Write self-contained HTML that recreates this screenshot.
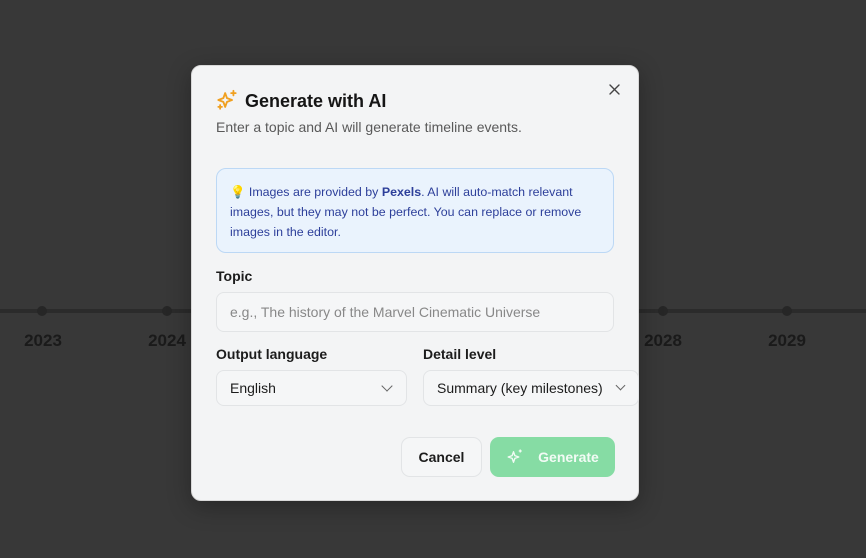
<!DOCTYPE html>
<html><head><style>
*{box-sizing:border-box;margin:0;padding:0}
body{width:866px;height:558px;background:#383838;font-family:"Liberation Sans",sans-serif;position:relative;overflow:hidden}
.line{position:absolute;left:0;top:309px;width:866px;height:4px;background:#2b2b2b}
.dot{position:absolute;top:306px;width:10px;height:10px;border-radius:50%;background:#262626}
.yr{position:absolute;top:331px;font-weight:bold;font-size:17px;color:#1a1a1a;width:60px;text-align:center}
.dlg{position:absolute;left:191px;top:65px;width:448px;height:436px;background:#f3f4f5;border-radius:10px;border:1px solid #d8d8d8;box-shadow:0 6px 24px rgba(0,0,0,.3)}
.title{position:absolute;left:53px;top:25px;font-size:18px;font-weight:bold;color:#151515}
.sub{position:absolute;left:24px;top:53px;font-size:14px;color:#595959}
.info{position:absolute;left:24px;top:102px;width:398px;height:85px;border:1px solid #bcd8f5;background:#eaf3fd;border-radius:10px;padding:13px 12px 0 13px;font-size:12.4px;line-height:20px;color:#2d3f9a}
.lbl{position:absolute;font-size:14px;font-weight:bold;color:#1c1c1c}
.inp{position:absolute;border:1px solid #e2e4e6;border-radius:8px;background:#f5f6f7;font-size:14px;padding-left:13px;display:flex;align-items:center;color:#1c1c1c}
.chev{position:absolute;top:13px;width:8px;height:8px;border-right:1.3px solid #666;border-bottom:1.3px solid #666;transform:rotate(45deg)}
.btn{position:absolute;top:371px;height:40px;border-radius:9px;font-size:14px;font-weight:bold;display:flex;align-items:center;justify-content:center}
</style></head><body>
<div class="line"></div>
<div class="dot" style="left:37px"></div><div class="dot" style="left:162px"></div><div class="dot" style="left:658px"></div><div class="dot" style="left:782px"></div>
<div class="yr" style="left:13px">2023</div><div class="yr" style="left:137px">2024</div><div class="yr" style="left:633px">2028</div><div class="yr" style="left:757px">2029</div>
<div class="dlg">
<svg style="position:absolute;left:24px;top:23px" width="22" height="22" viewBox="0 0 24 24" fill="none" stroke="#f0a020" stroke-width="2" stroke-linejoin="round" stroke-linecap="round"><path d="M10 4.5 L12 10 L17.5 12 L12 14 L10 19.5 L8 14 L2.5 12 L8 10Z"/><path d="M19 2v5M16.5 4.5h5M4.5 17.5v4M2.5 19.5h4"/></svg>
<div class="title">Generate with AI</div>
<svg style="position:absolute;left:417px;top:18px" width="11" height="11" viewBox="0 0 11 11" stroke="#444" stroke-width="1.4" stroke-linecap="round"><path d="M1 1L10 10M10 1L1 10"/></svg>
<div class="sub">Enter a topic and AI will generate timeline events.</div>
<div class="info">💡 Images are provided by <b style="font-weight:600">Pexels</b>. AI will auto-match relevant images, but they may not be perfect. You can replace or remove images in the editor.</div>
<div class="lbl" style="left:24px;top:202px">Topic</div>
<div class="inp" style="left:24px;top:226px;width:398px;height:40px;color:#888">e.g., The history of the Marvel Cinematic Universe</div>
<div class="lbl" style="left:24px;top:280px">Output language</div>
<div class="lbl" style="left:231px;top:280px">Detail level</div>
<div class="inp" style="left:24px;top:304px;width:191px;height:36px">English<span class="chev" style="left:166px;top:11px"></span></div>
<div class="inp" style="left:231px;top:304px;width:216px;height:36px">Summary (key milestones)<span class="chev" style="left:193px;top:11px;width:7px;height:7px"></span></div>
<div class="btn" style="left:209px;width:81px;border:1px solid #e2e4e6;background:#f5f6f7;color:#1c1c1c">Cancel</div>
<div class="btn" style="left:298px;width:125px;background:#86dca4;color:#f2fbf5"><svg style="margin-right:14px" width="18" height="18" viewBox="0 0 24 24" fill="none" stroke="#f2fbf5" stroke-width="1.8" stroke-linejoin="round"><path d="M10 5 L11.8 10.2 L17 12 L11.8 13.8 L10 19 L8.2 13.8 L3 12 L8.2 10.2Z"/><path d="M19 2v4M17 4h4"/></svg>Generate</div>
</div>
</body></html>
